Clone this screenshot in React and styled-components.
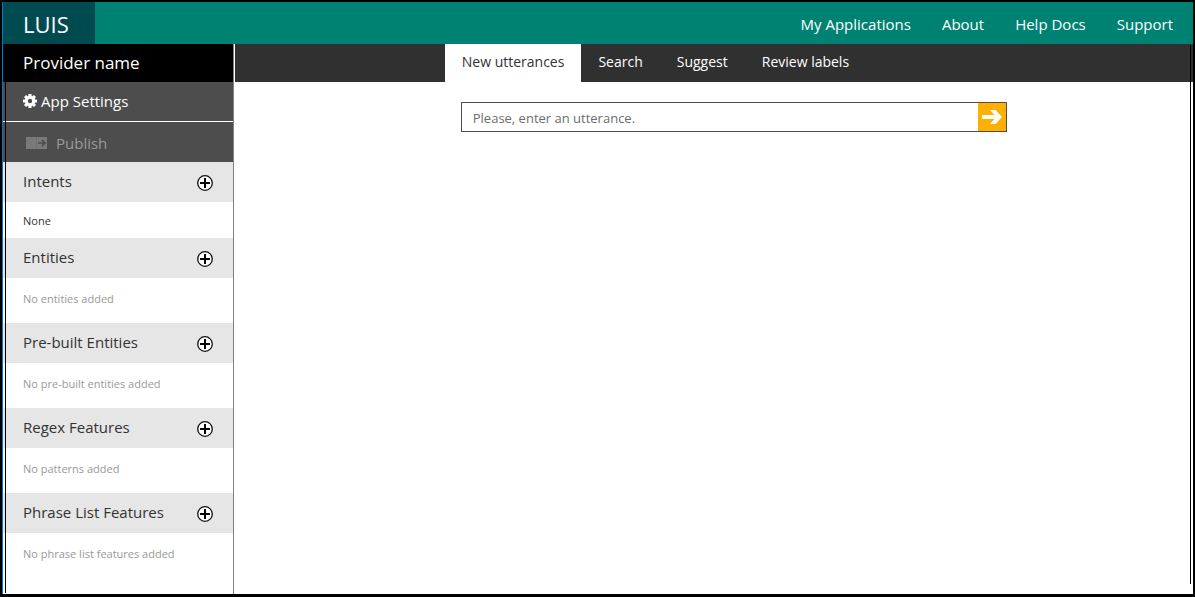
import React from "react";
import styled, { createGlobalStyle } from "styled-components";

const GlobalStyle = createGlobalStyle`
  *, *::before, *::after { box-sizing: border-box; }
  body {
    margin: 0;
    background: #fff;
    font-family: "Segoe UI", "Open Sans", "Noto Sans", sans-serif;
    font-size: 15px;
    line-height: 20px;
    color: #333;
  }
  h1, h2, p { margin: 0; font-weight: 400; }
  button, input { font: inherit; border: 0; margin: 0; padding: 0; border-radius: 0; }
  a { color: inherit; text-decoration: none; }
`;

const Frame = styled.div`
  min-height: 100vh;
  display: flex;
  flex-direction: column;
  border: 2px solid #000;
  border-bottom-width: 3px;
`;

const Header = styled.header`
  display: flex;
  justify-content: space-between;
  height: 42px;
  background: #008272;
  border-left: 1px solid #0078d7;
  color: #fff;
`;

const Brand = styled.a`
  display: flex;
  align-items: center;
  width: 92px;
  padding: 2px 0 0 20px;
  background: #004b50;
  font-size: 22px;
`;

const TopNav = styled.nav`
  display: flex;
  align-items: center;
  gap: 31px;
  padding: 1px 20px 0 0;
`;

const Body = styled.div`
  position: relative;
  flex: 1;
  display: flex;
  border-left: 1px solid #0078d7;

  &::before,
  &::after {
    content: "";
    position: absolute;
    width: 1px;
    background: #000;
  }
  &::before { left: 2px; top: 0; bottom: 1px; }
  &::after { right: 2px; top: 1px; bottom: 10px; }
`;

const Sidebar = styled.aside`
  flex: none;
  width: 231px;
  border-right: 1px solid #808080;
`;

const Provider = styled.h1`
  height: 38px;
  padding: 0 20px;
  background: #000;
  color: #fff;
  font-size: 17px;
  line-height: 38px;
`;

const SideButton = styled.button`
  display: flex;
  align-items: center;
  gap: ${(p) => (p.$inset ? 9 : 4)}px;
  width: 100%;
  height: 40px;
  padding: ${(p) => (p.$inset ? "1px 0 0 23px" : "0 0 2px 20px")};
  background: #4d4d4d;
  border-bottom: ${(p) => (p.$divided ? "1px solid #fff" : "0")};
  color: ${(p) => (p.$inset ? "#999" : "#fff")};
`;

const SectionHead = styled.div`
  display: flex;
  align-items: center;
  justify-content: space-between;
  height: 40px;
  padding: 0 20px 2px;
  background: #e6e6e6;
`;

const SectionTitle = styled.h2`
  font-size: 15px;
  line-height: 20px;
`;

const AddButton = styled.button`
  display: flex;
  padding-top: 4px;
  background: transparent;
`;

const Item = styled.p`
  height: ${(p) => (p.$empty ? 45 : 36)}px;
  padding: ${(p) => (p.$empty ? 11 : 9)}px 20px 0;
  font-size: 11px;
  color: ${(p) => (p.$empty ? "#999" : "#333")};
`;

const Main = styled.main`
  flex: 1;
  min-width: 0;
  padding-left: 1px;
`;

const Tabs = styled.nav`
  display: flex;
  height: 38px;
  padding-left: calc(22% - 1px);
  background: #303030;
  font-size: 14px;
`;

const Tab = styled.a`
  padding: 8px 17px 0;
  background: ${(p) => (p.$active ? "#fff" : "transparent")};
  color: ${(p) => (p.$active ? "#333" : "#fff")};
`;

const UtteranceForm = styled.form`
  display: flex;
  width: 57%;
  height: 30px;
  margin: 20px 0 0 calc(22% + 15px);
  border: 1px solid #4d4d4d;
`;

const UtteranceInput = styled.input`
  flex: 1;
  min-width: 0;
  padding: 2px 11px 0;
  font-size: 13px;
  color: #333;
  &::placeholder { color: #6d6d6d; opacity: 1; }
`;

const SubmitButton = styled.button`
  display: flex;
  align-items: center;
  justify-content: center;
  width: 28px;
  background: #ffb000;
`;

const GearIcon = () => (
  <svg width="14" height="14" viewBox="0 0 14 14" aria-hidden="true">
    <g fill="#fff">
      {[0, 45, 90, 135].map((a) => (
        <rect key={a} x="5.4" y="0" width="3.2" height="14" rx="0.6" transform={`rotate(${a} 7 7)`} />
      ))}
      <circle cx="7" cy="7" r="5.2" />
    </g>
    <circle cx="7" cy="7" r="2.2" fill="#4d4d4d" />
  </svg>
);

const PublishIcon = () => (
  <svg width="21" height="12" viewBox="0 0 21 12" aria-hidden="true">
    <path fill="#7a7a7a" d="M0 0h21v12H0z" />
    <path stroke="#666" strokeDasharray="1 1" d="M10.5 0v12" />
    <path fill="none" stroke="#4d4d4d" strokeWidth="1.6" d="M12 6h7M15.8 2.800 19 6l-3.200 3.200" />
  </svg>
);

const PlusIcon = () => (
  <svg width="16" height="16" viewBox="0 0 16 16" aria-hidden="true">
    <circle cx="8" cy="8" r="7.3" fill="#fff" stroke="#111" strokeWidth="1.3" />
    <path stroke="#000" strokeWidth="2" d="M3 8h10M8 3v10" />
  </svg>
);

const ArrowIcon = () => (
  <svg width="20" height="16" viewBox="0 0 20 16" aria-hidden="true">
    <path fill="#fff" d="M0 6h12.500L8 1h5.500l6.500 7-6.500 7H8l4.500-5H0z" />
  </svg>
);

const links = ["My Applications", "About", "Help Docs", "Support"];
const tabs = ["New utterances", "Search", "Suggest", "Review labels"];
const sections = [
  { title: "Intents", item: "None" },
  { title: "Entities", empty: "No entities added" },
  { title: "Pre-built Entities", empty: "No pre-built entities added" },
  { title: "Regex Features", empty: "No patterns added" },
  { title: "Phrase List Features", empty: "No phrase list features added" },
];

export default function App() {
  return (
    <>
      <GlobalStyle />
      <Frame>
        <Header>
          <Brand href="#">LUIS</Brand>
          <TopNav>
            {links.map((l) => (
              <a key={l} href="#">{l}</a>
            ))}
          </TopNav>
        </Header>
        <Body>
          <Sidebar>
            <Provider>Provider name</Provider>
            <SideButton type="button" $divided>
              <GearIcon />
              App Settings
            </SideButton>
            <SideButton type="button" $inset disabled>
              <PublishIcon />
              Publish
            </SideButton>
            {sections.map((s) => (
              <section key={s.title}>
                <SectionHead>
                  <SectionTitle>{s.title}</SectionTitle>
                  <AddButton type="button" aria-label={`Add to ${s.title}`}>
                    <PlusIcon />
                  </AddButton>
                </SectionHead>
                <Item $empty={Boolean(s.empty)}>{s.item || s.empty}</Item>
              </section>
            ))}
          </Sidebar>
          <Main>
            <Tabs>
              {tabs.map((t, i) => (
                <Tab key={t} href="#" $active={i === 0}>{t}</Tab>
              ))}
            </Tabs>
            <UtteranceForm onSubmit={(e) => e.preventDefault()}>
              <UtteranceInput aria-label="Utterance" placeholder="Please, enter an utterance." />
              <SubmitButton type="submit" aria-label="Submit utterance">
                <ArrowIcon />
              </SubmitButton>
            </UtteranceForm>
          </Main>
        </Body>
      </Frame>
    </>
  );
}
